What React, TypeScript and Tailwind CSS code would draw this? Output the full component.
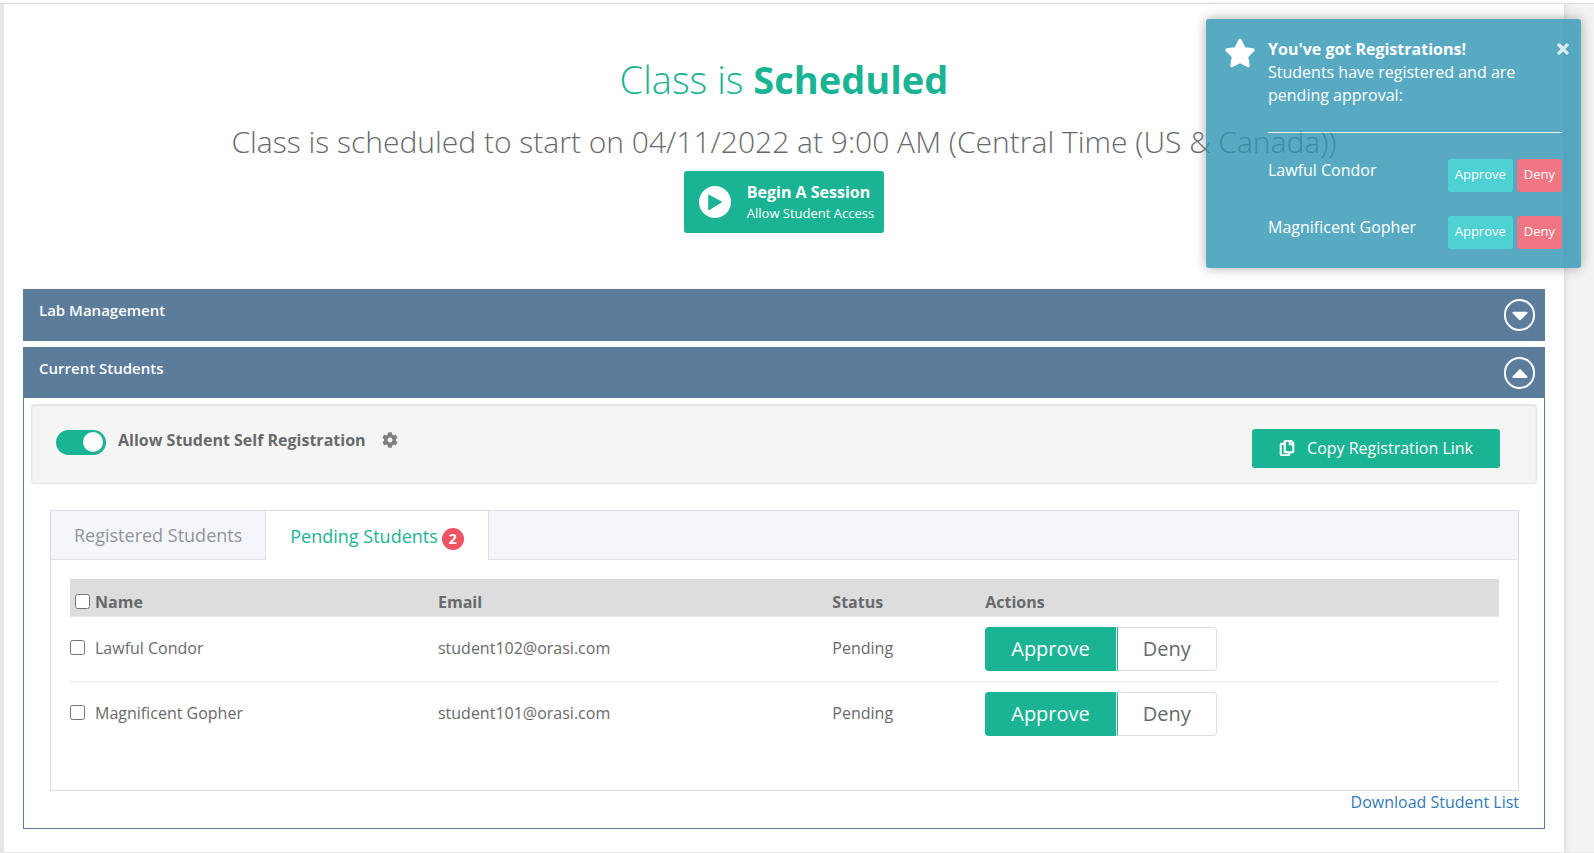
import { FaCaretDown, FaCaretUp, FaCog, FaRegCopy, FaTimes } from "react-icons/fa";
import { FaStar } from "react-icons/fa6";

const students = [
  { name: "Lawful Condor", email: "student102@orasi.com", status: "Pending" },
  { name: "Magnificent Gopher", email: "student101@orasi.com", status: "Pending" },
];

function PlayIcon() {
  return (
    <svg viewBox="0 0 32 32" className="size-8" aria-hidden="true">
      <circle cx="16" cy="16" r="16" fill="#ffffff" />
      <path
        d="M9.6 8.6 L22.6 15.6 Q23.4 16 22.6 16.5 L10.4 23.9 Q9.2 24.4 9.2 23.2 L9.2 9.2 Q9.2 8.4 9.9 8.8 Z"
        fill="#1ab394"
      />
    </svg>
  );
}

function PanelHeader({ title, open }: { title: string; open: boolean }) {
  return (
    <button
      type="button"
      aria-expanded={open}
      className={`flex w-full items-start justify-between bg-[#5c7c9b] pt-2.5 pr-2.5 pl-4 text-left text-white ${
        open ? "pb-[9px]" : "pb-2.5"
      }`}
    >
      <span className="text-[15px] leading-[22px] font-semibold">{title}</span>
      <span className="flex h-8 w-[31px] items-center justify-center rounded-full border-2 border-white">
        {open ? <FaCaretUp className="size-[26px]" /> : <FaCaretDown className="size-[26px]" />}
      </span>
    </button>
  );
}

function Toast() {
  return (
    <aside className="absolute top-[19px] right-[13px] flex w-[375px] gap-3 rounded-[3px] bg-[#2f96b4] pt-[18px] pr-[19px] pb-[19px] pl-[18px] text-base text-white opacity-80 shadow-[0_0_12px_#999]">
      <FaStar className="size-8 shrink-0" />
      <div className="min-w-0 flex-1 pt-px">
        <div className="leading-[23px] font-bold">You've got Registrations!</div>
        <div className="leading-[23px]">Students have registered and are pending approval:</div>
        <hr className="mt-[25px] border-t border-[#eeeeee]" />
        <ul className="mt-[26px] flex flex-col gap-6">
          {students.map((s) => (
            <li key={s.name} className="flex items-start gap-1">
              <span className="flex-1 leading-[23px]">{s.name}</span>
              <button type="button" className="h-[33px] rounded-[3px] bg-[#23c6c8] px-[7px] pb-0.5 text-[13px]">
                Approve
              </button>
              <button type="button" className="h-[33px] rounded-[3px] bg-[#ed5565] px-[7px] pb-0.5 text-[13px]">
                Deny
              </button>
            </li>
          ))}
        </ul>
      </div>
      <button type="button" aria-label="Close" className="absolute top-[22px] right-2.5 opacity-80">
        <FaTimes className="size-4 stroke-current stroke-[24px]" />
      </button>
    </aside>
  );
}

export default function App() {
  return (
    <div className="relative min-h-screen bg-white pt-[3px] font-['Open_Sans','Noto_Sans',sans-serif] text-base text-[#676a6c]">
      <div className="border-y border-t-[#dcdcdc] border-b-[#e7eaec] bg-[#f3f3f3] pr-[29px] pl-1 shadow-[inset_4px_0_0_#e7e7e7]">
        <main className="border-r border-[#dfe1ea] bg-white px-[19px] pt-[49px] pb-[23px] shadow-[2px_0_5px_#e2e2e2]">
          <header className="flex flex-col items-center">
            <h1 className="text-[38px] leading-[52px] font-light text-[#1ab394]">
              Class is <strong className="font-bold">Scheduled</strong>
            </h1>
            <h2 className="mt-[17px] text-[30px] leading-10 font-light">
              Class is scheduled to start on 04/11/2022 at 9:00 AM (Central Time (US &amp; Canada))
            </h2>
            <button
              type="button"
              className="mt-[9px] flex h-[62px] items-center gap-4 rounded-[3px] bg-[#1ab394] pr-2.5 pl-[15px] text-left text-white"
            >
              <PlayIcon />
              <span className="flex flex-col">
                <span className="leading-[22px] font-bold">Begin A Session</span>
                <span className="text-[13px] leading-5">Allow Student Access</span>
              </span>
            </button>
          </header>

          <section className="mt-14">
            <PanelHeader title="Lab Management" open={false} />
          </section>

          <section className="mt-1.5">
            <PanelHeader title="Current Students" open />
            <div className="border border-t-0 border-[#5c7c9b] px-[7px] pt-1.5 pb-[14px]">
              <div className="flex h-20 items-center justify-between rounded-[4px] border border-[#e3e3e3] bg-[#f5f5f5] pr-9 pl-6 shadow-[inset_0_1px_2px_#e3e3e3]">
                <div className="flex items-center pb-1">
                  <input
                    id="self-registration"
                    type="checkbox"
                    role="switch"
                    defaultChecked
                    className="h-[25px] w-[50px] appearance-none rounded-full bg-[#a8a8a8] p-0.5 before:block before:size-5 before:rounded-full before:bg-white checked:bg-[#1ab394] checked:before:ml-[25px]"
                  />
                  <label htmlFor="self-registration" className="ml-3 pb-1 leading-6 font-bold">
                    Allow Student Self Registration
                  </label>
                  <button type="button" aria-label="Registration settings" className="mb-1 ml-4 text-[#808080]">
                    <FaCog className="size-4" />
                  </button>
                </div>
                <button
                  type="button"
                  className="mt-2 flex h-[39px] items-center gap-3 rounded-[3px] bg-[#1ab394] px-[27px] text-white"
                >
                  <FaRegCopy className="size-4 stroke-current stroke-[20px]" />
                  Copy Registration Link
                </button>
              </div>

              <div className="pt-[26px] pr-[18px] pl-[19px]">
                <div className="border border-[#dddee5]">
                  <div role="tablist" className="flex h-[49px] bg-[#f5f6fb] text-lg">
                    <button
                      type="button"
                      role="tab"
                      aria-selected="false"
                      className="border-b border-[#e2e3e8] px-[23px] text-[#91959a]"
                    >
                      Registered Students
                    </button>
                    <button
                      type="button"
                      role="tab"
                      aria-selected="true"
                      className="flex items-center gap-1 border-x border-[#dddee5] bg-white px-6 text-[#1ab394]"
                    >
                      Pending Students
                      <span className="mt-1.5 flex size-[22px] items-center justify-center rounded-full bg-[#ed5565] text-sm font-bold text-white">
                        2
                      </span>
                    </button>
                    <div className="flex-1 border-b border-[#e2e3e8]" />
                  </div>

                  <div role="tabpanel" className="px-[19px] pt-[19px] pb-11">
                    <table className="w-full table-fixed text-left">
                      <colgroup>
                        <col className="w-[25px]" />
                        <col className="w-[24%]" />
                        <col className="w-[27.6%]" />
                        <col className="w-[10.7%]" />
                        <col />
                      </colgroup>
                      <thead>
                        <tr className="h-[37px] border-b border-[#e7eaec] bg-[#dddddd]">
                          <th className="pt-2 pl-[5px]">
                            <input type="checkbox" aria-label="Select all" className="block size-[15px]" />
                          </th>
                          <th className="pt-2.5 leading-6 font-bold">Name</th>
                          <th className="pt-2.5 leading-6 font-bold">Email</th>
                          <th className="pt-2.5 leading-6 font-bold">Status</th>
                          <th className="pt-2.5 leading-6 font-bold">Actions</th>
                        </tr>
                      </thead>
                      <tbody>
                        {students.map((s) => (
                          <tr key={s.name} className="h-[65px] border-b border-[#e7eaec] last:border-b-0">
                            <td className="pb-0.5">
                              <input type="checkbox" aria-label={`Select ${s.name}`} className="block size-[15px]" />
                            </td>
                            <td className="pb-0.5">{s.name}</td>
                            <td className="pb-0.5">{s.email}</td>
                            <td className="pb-0.5">{s.status}</td>
                            <td>
                              <div className="flex h-11 text-xl">
                                <button
                                  type="button"
                                  className="rounded-l-[4px] bg-[#1ab394] px-[26px] text-white"
                                >
                                  Approve
                                </button>
                                <span className="flex border-l border-[#e7eaec]">
                                  <button
                                    type="button"
                                    className="rounded-r-[4px] border border-[#dedfe0] border-l-[#1ab394] bg-white px-[25px]"
                                  >
                                    Deny
                                  </button>
                                </span>
                              </div>
                            </td>
                          </tr>
                        ))}
                      </tbody>
                    </table>
                  </div>
                </div>
                <div className="flex justify-end">
                  <a href="#download" className="leading-[23px] text-[#337ab7]">
                    Download Student List
                  </a>
                </div>
              </div>
            </div>
          </section>
        </main>
      </div>
      <Toast />
    </div>
  );
}
